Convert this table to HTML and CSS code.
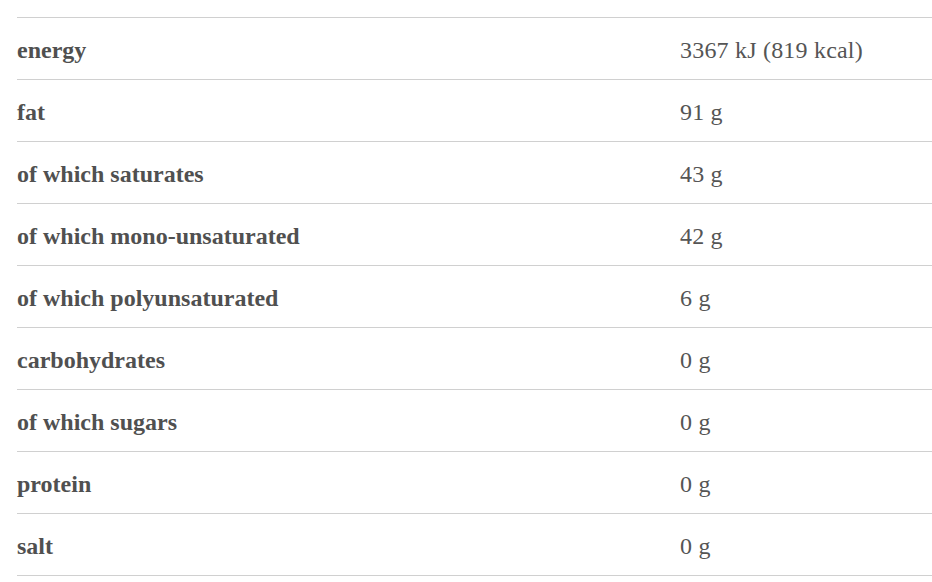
FILE: index.html
```html
<!DOCTYPE html>
<html lang="en">
<head>
    <meta charset="UTF-8">
    <meta name="viewport" content="width=device-width, initial-scale=1.0">
    <link rel="stylesheet" href="styles.css">
    <title>Nutrition</title>
</head>
<body>
    <table class="nutrition">
        <tr><th>energy</th><td>3367 kJ (819 kcal)</td></tr>
        <tr><th>fat</th><td>91 g</td></tr>
        <tr><th>of which saturates</th><td>43 g</td></tr>
        <tr><th>of which mono-unsaturated</th><td>42 g</td></tr>
        <tr><th>of which polyunsaturated</th><td>6 g</td></tr>
        <tr><th>carbohydrates</th><td>0 g</td></tr>
        <tr><th>of which sugars</th><td>0 g</td></tr>
        <tr><th>protein</th><td>0 g</td></tr>
        <tr><th>salt</th><td>0 g</td></tr>
    </table>
</body>
</html>
```

FILE: styles.css
```css
body {
    margin: 0;
    padding: 17px 0 0 17px;
    background-color: #fff;
    font-family: 'Liberation Serif', 'Times New Roman', serif;
}

.nutrition {
    width: 915px;
    border-collapse: collapse;
}

.nutrition tr {
    height: 62px;
    border-top: 1px solid #d0d0d0;
    border-bottom: 1px solid #d0d0d0;
}

.nutrition th {
    width: 663px;
    padding: 4px 0 0 0;
    text-align: left;
    font-size: 24px;
    font-weight: bold;
    color: #505050;
}

.nutrition td {
    padding: 4px 0 0 0;
    font-size: 24px;
    letter-spacing: 0.2px;
    color: #555;
}
```
